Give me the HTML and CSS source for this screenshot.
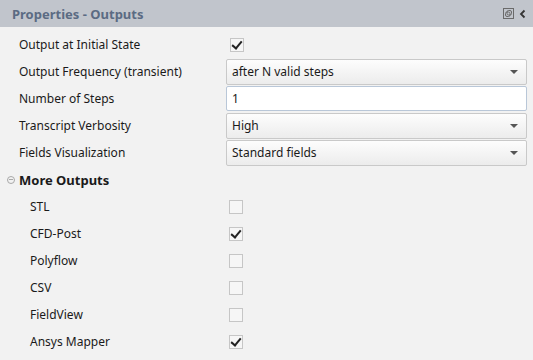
FILE: index.html
```html
<!DOCTYPE html>
<html lang="en">
<head>
    <meta charset="UTF-8">
    <title>Properties - Outputs</title>
    <link rel="stylesheet" href="styles.css">
</head>
<body>
    <div class="panel">
        <div class="panel-head">
            <span class="panel-title">Properties - Outputs</span>
            <span class="head-icons">
                <svg width="11" height="11" viewBox="0 0 11 11">
                    <rect x="0.5" y="0.5" width="10" height="10" fill="none" stroke="#6a6a6a"/>
                    <rect x="2.5" y="4" width="4.5" height="4.5" rx="1.5" fill="none" stroke="#6a6a6a"/>
                    <rect x="4" y="2.5" width="4.5" height="4.5" rx="1.5" fill="none" stroke="#6a6a6a"/>
                </svg>
                <svg width="7" height="10" viewBox="0 0 7 10">
                    <path d="M5.5 1.5 L2 5 L5.5 8.5" fill="none" stroke="#333" stroke-width="1.8"/>
                </svg>
            </span>
        </div>

        <div class="rows">
            <div class="row">
                <span class="label">Output at Initial State</span>
                <span class="check on"></span>
            </div>
            <div class="row">
                <span class="label">Output Frequency (transient)</span>
                <div class="select">after N valid steps<i class="arrow"></i></div>
            </div>
            <div class="row">
                <span class="label">Number of Steps</span>
                <div class="input">1</div>
            </div>
            <div class="row">
                <span class="label">Transcript Verbosity</span>
                <div class="select">High<i class="arrow"></i></div>
            </div>
            <div class="row">
                <span class="label">Fields Visualization</span>
                <div class="select">Standard fields<i class="arrow"></i></div>
            </div>

            <div class="row group">
                <span class="toggle"></span>
                <span class="group-title">More Outputs</span>
            </div>
            <div class="row sub">
                <span class="label">STL</span>
                <span class="check"></span>
            </div>
            <div class="row sub">
                <span class="label">CFD-Post</span>
                <span class="check on"></span>
            </div>
            <div class="row sub">
                <span class="label">Polyflow</span>
                <span class="check"></span>
            </div>
            <div class="row sub">
                <span class="label">CSV</span>
                <span class="check"></span>
            </div>
            <div class="row sub">
                <span class="label">FieldView</span>
                <span class="check"></span>
            </div>
            <div class="row sub">
                <span class="label">Ansys Mapper</span>
                <span class="check on"></span>
            </div>
        </div>
    </div>
</body>
</html>
```

FILE: styles.css
```css
* {
    margin: 0;
    padding: 0;
    box-sizing: border-box;
}

body {
    background-color: #f2f2f2;
    font-family: "Noto Sans", "Open Sans", sans-serif;
    font-size: 12px;
    color: #1a1a1a;
}

.panel-head {
    height: 27px;
    background-color: #c1c5cc;
    display: flex;
    align-items: center;
    justify-content: space-between;
    padding: 0 7px 0 12px;
}

.panel-title {
    font-weight: bold;
    font-size: 13px;
    color: #5b6b83;
}

.head-icons {
    display: flex;
    align-items: center;
    gap: 5px;
}

.rows {
    padding-top: 4px;
}

.row {
    height: 27px;
    display: flex;
    align-items: center;
}

.label {
    width: 226px;
    padding-left: 19px;
}

.sub .label {
    padding-left: 30px;
    width: 229px;
}

.check {
    width: 14px;
    height: 14px;
    border: 1px solid #c6c6c6;
    background-color: #f6f6f6;
    margin-left: 4px;
    display: flex;
    align-items: center;
    justify-content: center;
}

.sub .check {
    margin-left: 0;
}

.check.on::after {
    content: "";
    width: 4px;
    height: 8px;
    border-right: 2.5px solid #222;
    border-bottom: 2.5px solid #222;
    transform: rotate(40deg);
    margin-top: -2px;
}

.select,
.input {
    width: 301px;
    height: 26px;
    border: 1px solid #c9c9c9;
    border-radius: 2px;
    display: flex;
    align-items: center;
    justify-content: space-between;
    padding: 0 8px 0 5px;
}

.select {
    background: linear-gradient(#fdfdfd, #ececec);
}

.input {
    background-color: #fff;
    border-color: #b9c7d8;
    height: 25px;
}

.arrow {
    width: 0;
    height: 0;
    border-left: 4px solid transparent;
    border-right: 4px solid transparent;
    border-top: 4px solid #555;
}

.group-title {
    font-weight: bold;
    font-size: 13px;
}

.toggle {
    width: 8px;
    height: 8px;
    border: 1px solid #a8a8a8;
    border-radius: 50%;
    margin: 0 4px 0 7px;
    display: flex;
    align-items: center;
    justify-content: center;
}

.toggle::after {
    content: "";
    width: 4px;
    height: 1px;
    background-color: #a8a8a8;
}
```
